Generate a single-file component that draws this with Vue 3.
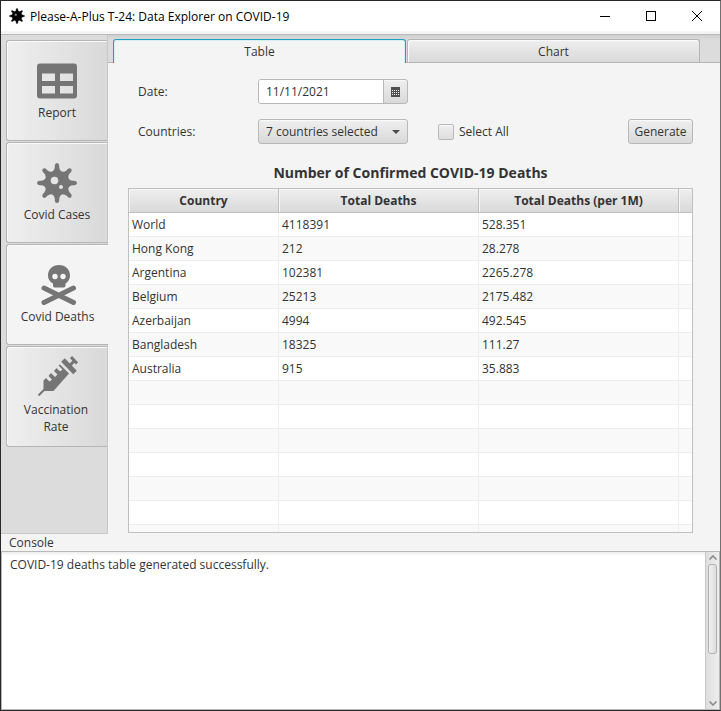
<script setup>
import { ref } from 'vue'

const sideTabs = [
  { id: 'report', label: 'Report' },
  { id: 'cases', label: 'Covid Cases' },
  { id: 'deaths', label: 'Covid Deaths' },
  { id: 'vaccination', label: 'Vaccination Rate' },
]
const activeSide = ref('deaths')
const views = ['Table', 'Chart']
const activeView = ref('Table')
const date = ref('11/11/2021')
const selectAll = ref(false)
const message = ref('COVID-19 deaths table generated successfully.')

const rows = [
  ['World', '4118391', '528.351'],
  ['Hong Kong', '212', '28.278'],
  ['Argentina', '102381', '2265.278'],
  ['Belgium', '25213', '2175.482'],
  ['Azerbaijan', '4994', '492.545'],
  ['Bangladesh', '18325', '111.27'],
  ['Australia', '915', '35.883'],
]
const emptyRows = 7
const spokes = [0, 45, 90, 135, 180, 225, 270, 315]
</script>

<template>
  <div class="window">
    <header class="titlebar">
      <svg class="app-icon" viewBox="0 0 40 40" aria-hidden="true">
        <circle cx="20" cy="20" r="12.5" />
        <path v-for="a in spokes" :key="a" d="M16 11L18 4Q18 1 20 1Q22 1 22 4L24 11Z" :transform="`rotate(${a} 20 20)`" stroke="#000" stroke-width="1" />
        <circle cx="17" cy="17" r="3" fill="#777" />
      </svg>
      <h1 class="caption">Please-A-Plus T-24: Data Explorer on COVID-19</h1>
      <div class="window-controls">
        <button type="button" aria-label="Minimize"><svg viewBox="0 0 12 12"><path d="M1 6.5H11" /></svg></button>
        <button type="button" aria-label="Maximize"><svg viewBox="0 0 12 12"><rect x="1.5" y="1.5" width="9" height="9" /></svg></button>
        <button type="button" aria-label="Close"><svg viewBox="0 0 12 12"><path d="M1 1L11 11M11 1L1 11" /></svg></button>
      </div>
    </header>

    <main class="workspace">
      <nav class="sidebar">
        <button
          v-for="tab in sideTabs"
          :key="tab.id"
          type="button"
          class="side-tab"
          :class="[tab.id, { active: activeSide === tab.id }]"
          @click="activeSide = tab.id"
        >
          <svg v-if="tab.id === 'report'" viewBox="0 0 40 40" aria-hidden="true">
            <path fill-rule="evenodd" d="M3 2.500H37Q40 2.500 40 5.500V34.500Q40 37.500 37 37.500H3Q0 37.500 0 34.500V5.500Q0 2.500 3 2.500ZM5 12.500V20H18V12.500ZM23 12.500V20H36V12.500ZM5 25V32.500H18V25ZM23 25V32.500H36V25Z" />
          </svg>
          <svg v-else-if="tab.id === 'cases'" viewBox="0 0 40 40" aria-hidden="true">
            <path
              v-for="a in spokes"
              :key="a"
              d="M13 10Q17.600 8 17.800 4V2.500Q18 0 20 0Q22 0 22.200 2.500V4Q22.400 8 27 10L20 20Z"
              :transform="`rotate(${a} 20 20)`"
            />
            <circle cx="20" cy="20" r="11.500" />
            <circle class="spot" cx="17.500" cy="17.500" r="3.800" />
            <circle class="spot" cx="24" cy="24" r="2" />
          </svg>
          <svg v-else-if="tab.id === 'deaths'" viewBox="0 0 40 40" aria-hidden="true">
            <path fill-rule="evenodd" d="M21 0C27.500 0 32 4.500 32 10.500C32 14 30.500 16.500 27.500 18.500V20.500Q27.500 22.500 25.500 22.500H16.500Q15 22.500 15 20.500V18.500C11.500 16.500 10 14 10 10.500C10 4.500 14.500 0 21 0ZM17 8.800A2.700 2.700 0 1 0 17 14.200A2.700 2.700 0 1 0 17 8.800ZM25 8.800A2.700 2.700 0 1 0 25 14.200A2.700 2.700 0 1 0 25 8.800Z" />
            <path class="bone" d="M6 23L35.500 37.500M35.500 23L6 37.500" />
          </svg>
          <svg v-else viewBox="0 0 40 40" aria-hidden="true">
            <path d="M0.500 39.500L6.500 33.500" stroke-width="2" class="line" />
            <path d="M5.500 35V24.500L8 22L11.500 25.500L14 23.500L10.500 20L13 17L17 21L19.500 18.500L16 15L18.500 12L22 15.500L24.500 13.500L20.500 9.500L22 8.500L31 17.500L15.500 35Z" />
            <path d="M25 4L37 16.500" class="line" stroke-width="5" />
            <path d="M31 10.500L36.500 4.500M33 1L39 7.500" class="line" stroke-width="3" />
          </svg>
          <span>{{ tab.label }}</span>
        </button>
      </nav>

      <section class="content">
        <div class="view-tabs" role="tablist">
          <button
            v-for="view in views"
            :key="view"
            type="button"
            role="tab"
            class="view-tab"
            :class="{ active: activeView === view }"
            :aria-selected="activeView === view"
            @click="activeView = view"
          >{{ view }}</button>
        </div>

        <div class="panel">
          <form class="filters" @submit.prevent>
            <label for="date">Date:</label>
            <div class="date-picker">
              <input id="date" v-model="date" type="text">
              <button type="button" aria-label="Open calendar">
                <svg viewBox="0 0 9 10" aria-hidden="true" shape-rendering="crispEdges">
                  <path fill="#505050" d="M0 0H9V10H0Z" />
                  <path fill="#eee" d="M1 3h1v1h-1zM3 3h1v1h-1zM5 3h1v1h-1zM7 3h1v1h-1zM1 5h1v1h-1zM3 5h1v1h-1zM5 5h1v1h-1zM7 5h1v1h-1zM1 7h1v1h-1zM3 7h1v1h-1zM5 7h1v1h-1zM7 7h1v1h-1z" />
                </svg>
              </button>
            </div>
            <label class="second" for="countries">Countries:</label>
            <div class="combo">
              <select id="countries">
                <option>7 countries selected</option>
              </select>
              <svg viewBox="0 0 8 4" aria-hidden="true"><path d="M0 0H8L4 4Z" /></svg>
            </div>
            <label class="check"><input v-model="selectAll" type="checkbox">Select All</label>
            <button type="submit" class="generate">Generate</button>
          </form>

          <h2 class="heading">Number of Confirmed COVID-19 Deaths</h2>
          <div class="table-frame">
            <table>
              <colgroup><col class="country"><col class="number"><col class="number"><col></colgroup>
              <thead>
                <tr><th>Country</th><th>Total Deaths</th><th>Total Deaths (per 1M)</th><th></th></tr>
              </thead>
              <tbody>
                <tr v-for="row in rows" :key="row[0]">
                  <td v-for="cell in row" :key="cell">{{ cell }}</td><td></td>
                </tr>
                <tr v-for="n in emptyRows" :key="n"><td></td><td></td><td></td><td></td></tr>
              </tbody>
            </table>
          </div>
        </div>
      </section>
    </main>

    <section class="console">
      <label for="console-output">Console</label>
      <div class="console-box">
        <textarea id="console-output" v-model="message" spellcheck="false"></textarea>
        <div class="scrollbar" aria-hidden="true">
          <svg viewBox="0 0 8 5"><path d="M0.500 4.500L4 1L7.500 4.500" /></svg>
          <div class="track"><div class="thumb"></div></div>
          <svg viewBox="0 0 8 5"><path d="M0.500 0.500L4 4L7.500 0.500" /></svg>
        </div>
      </div>
    </section>
  </div>
</template>

<style>
body {
  margin: 0;
}
</style>

<style scoped>
.window,
.window * {
  box-sizing: border-box;
}
.window {
  display: flex;
  flex-direction: column;
  height: 100vh;
  border: 1px solid #2a2729;
  border-right-color: #707070;
  background: #f4f4f4;
  color: #333;
  font: 12px/17px "Open Sans", "Noto Sans", sans-serif;
}
button,
input,
select,
textarea {
  margin: 0;
  font: inherit;
  color: inherit;
}
svg {
  display: block;
}

.titlebar {
  display: flex;
  align-items: center;
  height: 30px;
  flex: none;
  padding-left: 8px;
  background: #fff;
  color: #000;
}
.app-icon {
  width: 16px;
  height: 16px;
}
.caption {
  flex: 1;
  margin: 0 0 0 5px;
  font-size: 12px;
  font-weight: 400;
  white-space: nowrap;
}
.window-controls {
  display: flex;
}
.window-controls button {
  display: grid;
  place-items: center;
  width: 46px;
  height: 29px;
  padding: 0;
  border: 0;
  background: none;
}
.window-controls svg {
  width: 12px;
  height: 12px;
  fill: none;
  stroke: #000;
}

.workspace {
  display: flex;
  flex: 1;
  min-height: 0;
  margin-top: 3px;
  border-top: 1px solid #bababa;
}
.sidebar {
  display: flex;
  flex-direction: column;
  gap: 1px;
  width: 107px;
  flex: none;
  padding: 5px 0 0 5px;
  border-right: 1px solid #c8c8c8;
  border-bottom: 1px solid #c8c8c8;
  background: #dcdcdc;
}
.side-tab {
  display: flex;
  flex-direction: column;
  align-items: center;
  justify-content: center;
  gap: 3px;
  height: 101px;
  padding: 0 8px;
  border: 1px solid #b5b5b5;
  border-right: 0;
  border-radius: 3px 0 0 3px;
  background: linear-gradient(to right, #efefef, #d9d9d9);
  box-shadow: inset 1px 1px #fafafa;
}
.side-tab.active {
  margin-right: -1px;
  background: #f4f4f4;
}
.side-tab.vaccination {
  justify-content: flex-start;
  gap: 5px;
  padding: 9px 8px 0 10px;
}
.side-tab.vaccination span {
  padding-right: 4px;
}
.side-tab svg {
  width: 40px;
  height: 40px;
  flex: none;
  fill: #757575;
}
.side-tab .spot {
  fill: #e4e4e4;
}
.bone,
.line {
  fill: none;
  stroke: #757575;
}
.bone {
  stroke-width: 5;
  stroke-linecap: round;
}

.content {
  display: flex;
  flex: 1;
  flex-direction: column;
  min-width: 0;
}
.view-tabs {
  display: flex;
  gap: 1px;
  height: 28px;
  flex: none;
  padding: 4px 20px 0 5px;
  border-bottom: 1px solid #b5b5b5;
  background: linear-gradient(#cfcfcf, #dcdcdc 5px);
}
.view-tab {
  flex: 1;
  padding: 0;
  border: 1px solid #b5b5b5;
  border-bottom: 0;
  border-radius: 3px 3px 0 0;
  background: linear-gradient(#efefef, #d9d9d9);
  box-shadow: inset 1px 1px #fafafa;
}
.view-tab.active {
  margin-bottom: -1px;
  border-color: #1e9fc8;
  background: #f4f4f4;
  box-shadow: inset 1px 1px #d8edf4, inset -1px 0 #d8edf4;
}

.panel {
  display: flex;
  flex: 1;
  flex-direction: column;
  min-height: 0;
  padding: 16px 27px 0 20px;
}
.filters {
  display: grid;
  grid-template-columns: 130px 150px auto 1fr;
  grid-auto-rows: 25px;
  row-gap: 15px;
  align-items: center;
}
.filters label {
  padding-left: 10px;
}
.second {
  grid-column: 1;
}
.date-picker,
.combo,
.generate {
  height: 25px;
  border: 1px solid #b8b8b8;
  border-radius: 3px;
  background: linear-gradient(#efefef, #d9d9d9);
  box-shadow: inset 0 1px #fafafa;
}
.date-picker {
  display: flex;
  overflow: hidden;
}
.date-picker input {
  flex: 1;
  min-width: 0;
  padding: 0 7px;
  border: 0;
  background: #fff;
}
.date-picker button {
  display: grid;
  place-items: center;
  width: 24px;
  padding: 0;
  border: 0;
  border-left: 1px solid #b8b8b8;
  background: none;
}
.date-picker svg {
  width: 9px;
  height: 10px;
}
.combo {
  display: grid;
  align-items: center;
}
.combo select,
.combo svg {
  grid-area: 1 / 1;
}
.combo select {
  width: 100%;
  height: 23px;
  padding: 0 7px;
  border: 0;
  background: none;
  appearance: none;
}
.combo svg {
  justify-self: end;
  width: 8px;
  height: 4px;
  margin-right: 7px;
  fill: #4a4a4a;
  pointer-events: none;
}
.filters .check {
  display: flex;
  align-items: center;
  gap: 5px;
  padding-left: 30px;
}
.check input {
  width: 16px;
  height: 16px;
  border: 1px solid #b8b8b8;
  border-radius: 2px;
  background: linear-gradient(#efefef, #dedede);
  box-shadow: inset 0 1px #fafafa;
  appearance: none;
}
.check input:checked {
  background: #555;
}
.generate {
  justify-self: end;
  width: 65px;
  padding: 0;
}
.heading {
  margin: 16px 0 2px;
  font-size: 14px;
  line-height: 26px;
  text-align: center;
}
.table-frame {
  flex: 1;
  min-height: 0;
  margin-bottom: 1px;
  overflow: hidden;
  border: 1px solid #c0c0c0;
  background: #fff;
}
table {
  width: 100%;
  border-collapse: separate;
  border-spacing: 0;
  table-layout: fixed;
}
.country {
  width: 150px;
}
.number {
  width: 200px;
}
th,
td {
  height: 24px;
  padding: 0 3px;
  border-right: 1px solid #ededed;
  border-bottom: 1px solid #ededed;
  line-height: 17px;
}
th {
  border-color: #c0c0c0;
  background: linear-gradient(#efefef, #d9d9d9);
  box-shadow: inset 1px 1px #f6f6f6;
}
th:last-child,
td:last-child {
  border-right: 0;
}
tbody tr:nth-child(even) {
  background: #f9f9f9;
}

.console {
  flex: none;
}
.console label {
  display: block;
  height: 17px;
  padding-left: 8px;
}
.console-box {
  display: flex;
  height: 159px;
  border: 1px solid #b8b8b8;
  background: #fff;
}
.console textarea {
  flex: 1;
  padding: 4px 8px;
  border: 0;
  outline: 0;
  background: linear-gradient(#ededed, #fff 4px);
  resize: none;
  overflow: hidden;
}
.scrollbar {
  display: flex;
  flex-direction: column;
  align-items: center;
  gap: 4px;
  width: 14px;
  padding: 3px 0;
  border-left: 1px solid #c8c8c8;
  background: linear-gradient(to right, #dedede, #eee);
}
.scrollbar svg {
  width: 8px;
  height: 5px;
  fill: none;
  stroke: #858585;
  stroke-width: 1.5;
}
.track {
  flex: 1;
}
.thumb {
  width: 9px;
  height: 90px;
  border: 1px solid #b0b0b0;
  border-radius: 3px;
  background: linear-gradient(to right, #f2f2f2, #dcdcdc);
}
</style>
